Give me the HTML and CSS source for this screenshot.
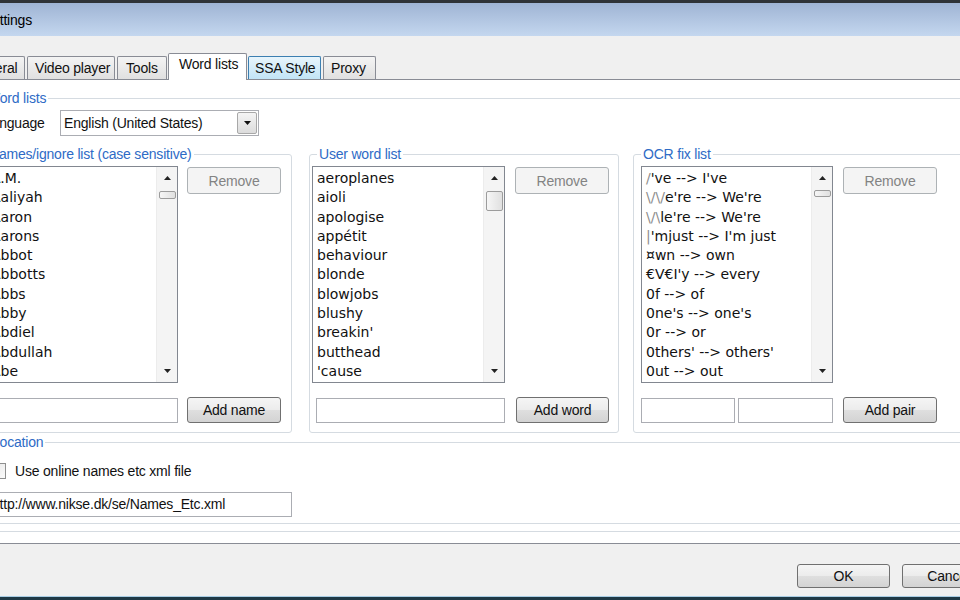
FILE: index.html
```html
<!DOCTYPE html>
<html lang="en">
<head>
  <meta charset="UTF-8" />
  <title>Settings</title>
  <meta name="viewport" content="width=device-width, initial-scale=1.0" />
  <link rel="stylesheet" href="styles.css">
</head>
<body>

  <div class="window">
    <div class="titlebar">Settings</div>

    <div class="client">
      <div class="tabs">
        <div class="tab tab-general">General</div>
        <div class="tab tab-video">Video player</div>
        <div class="tab tab-tools">Tools</div>
        <div class="tab tab-active">Word lists</div>
        <div class="tab tab-hover">SSA Style</div>
        <div class="tab tab-proxy">Proxy</div>
      </div>

      <div class="tab-page">
        <fieldset class="group group-words">
          <legend>Word lists</legend>

          <div class="lang-row">
            <span class="lang-label">Language</span>
            <div class="combo">
              <span>English (United States)</span>
              <span class="combo-btn">
                <svg width="7" height="4" viewBox="0 0 7 4"><polygon points="0,0 7,0 3.5,4" fill="#111" /></svg>
              </span>
            </div>
          </div>

          <div class="lists-row">
            <!-- names / ignore list -->
            <fieldset class="group box box-names">
              <legend>Names/ignore list (case sensitive)</legend>
              <div class="box-main">
                <div class="listbox">
                  <ul>
                    <li>A.M.</li>
                    <li>Aaliyah</li>
                    <li>Aaron</li>
                    <li>Aarons</li>
                    <li>Abbot</li>
                    <li>Abbotts</li>
                    <li>Abbs</li>
                    <li>Abby</li>
                    <li>Abdiel</li>
                    <li>Abdullah</li>
                    <li>Abe</li>
                  </ul>
                  <div class="scroll">
                    <span class="arrow"><svg width="7" height="4" viewBox="0 0 7 4"><polygon points="0,4 3.5,0 7,4" fill="#222" /></svg></span>
                    <span class="thumb thumb-small"></span>
                    <span class="scroll-space"></span>
                    <span class="arrow"><svg width="7" height="4" viewBox="0 0 7 4"><polygon points="0,0 7,0 3.5,4" fill="#222" /></svg></span>
                  </div>
                </div>
                <button class="btn btn-side btn-disabled">Remove</button>
              </div>
              <div class="box-add">
                <span class="textbox tb-names"></span>
                <button class="btn btn-add">Add name</button>
              </div>
            </fieldset>

            <!-- user word list -->
            <fieldset class="group box box-user">
              <legend>User word list</legend>
              <div class="box-main">
                <div class="listbox">
                  <ul>
                    <li>aeroplanes</li>
                    <li>aioli</li>
                    <li>apologise</li>
                    <li>appétit</li>
                    <li>behaviour</li>
                    <li>blonde</li>
                    <li>blowjobs</li>
                    <li>blushy</li>
                    <li>breakin'</li>
                    <li>butthead</li>
                    <li>'cause</li>
                  </ul>
                  <div class="scroll">
                    <span class="arrow"><svg width="7" height="4" viewBox="0 0 7 4"><polygon points="0,4 3.5,0 7,4" fill="#222" /></svg></span>
                    <span class="thumb thumb-tall"></span>
                    <span class="scroll-space"></span>
                    <span class="arrow"><svg width="7" height="4" viewBox="0 0 7 4"><polygon points="0,0 7,0 3.5,4" fill="#222" /></svg></span>
                  </div>
                </div>
                <button class="btn btn-side btn-disabled">Remove</button>
              </div>
              <div class="box-add">
                <span class="textbox tb-user"></span>
                <button class="btn btn-add">Add word</button>
              </div>
            </fieldset>

            <!-- OCR fix list -->
            <fieldset class="group box box-ocr">
              <legend>OCR fix list</legend>
              <div class="box-main">
                <div class="listbox">
                  <ul>
                    <li><span class="faint">/</span>'ve --&gt; I've</li>
                    <li><span class="faint">\/\/</span>e're --&gt; We're</li>
                    <li><span class="faint">\/\</span>le're --&gt; We're</li>
                    <li><span class="faint">|</span>'mjust --&gt; I'm just</li>
                    <li>¤wn --&gt; own</li>
                    <li>€V€I'y --&gt; every</li>
                    <li>0f --&gt; of</li>
                    <li>0ne's --&gt; one's</li>
                    <li>0r --&gt; or</li>
                    <li>0thers' --&gt; others'</li>
                    <li>0ut --&gt; out</li>
                  </ul>
                  <div class="scroll">
                    <span class="arrow"><svg width="7" height="4" viewBox="0 0 7 4"><polygon points="0,4 3.5,0 7,4" fill="#222" /></svg></span>
                    <span class="thumb thumb-small thumb-ocr"></span>
                    <span class="scroll-space"></span>
                    <span class="arrow"><svg width="7" height="4" viewBox="0 0 7 4"><polygon points="0,0 7,0 3.5,4" fill="#222" /></svg></span>
                  </div>
                </div>
                <button class="btn btn-side btn-disabled">Remove</button>
              </div>
              <div class="box-add">
                <span class="textbox tb-from"></span>
                <span class="textbox tb-to"></span>
                <button class="btn btn-add">Add pair</button>
              </div>
            </fieldset>
          </div>

          <fieldset class="group group-location">
            <legend>Location</legend>
            <div class="check-row">
              <span class="checkbox"></span>
              <span>Use online names etc xml file</span>
            </div>
            <div class="textbox tb-url">http://www.nikse.dk/se/Names_Etc.xml</div>
          </fieldset>
        </fieldset>
      </div>

      <div class="dialog-buttons">
        <button class="btn btn-dialog">OK</button>
        <button class="btn btn-dialog">Cancel</button>
      </div>
    </div>
  </div>

</body>
</html>
```

FILE: styles.css
```css
* {
  box-sizing: border-box;
}

html, body {
  margin: 0;
}

body {
  width: 960px;
  height: 600px;
  overflow: hidden;
  background: #f0f0f0;
  font-family: "Liberation Sans", Arial, sans-serif;
  font-size: 14px;
  letter-spacing: -0.2px;
  color: #111;
}

/* window frame, shifted left so the screenshot crop lines up */
.window {
  width: 1060px;
  height: 600px;
  margin-left: -40px;
  display: flex;
  flex-direction: column;
  border-bottom: 3px solid #1f3946;
}

.titlebar {
  height: 36px;
  border-top: 3px solid #2f3337;
  background: linear-gradient(#9fb4d4, #c4d7ef);
  padding-left: 23px;
  line-height: 34px;
  color: #000;
}

.client {
  flex: 1;
  background: #f0f0f0;
  padding-top: 17px;
  border-bottom: 1px solid #a9cde4;
}

/* tabs */
.tabs {
  display: flex;
  align-items: flex-start;
  height: 27px;
  padding-left: 1px;
}

.tab {
  height: 23px;
  margin-top: 3px;
  border: 1px solid #898c95;
  border-bottom: none;
  border-radius: 2px 2px 0 0;
  background: linear-gradient(#f4f4f4, #e0e0e0);
  padding-left: 7px;
  line-height: 22px;
  white-space: nowrap;
  color: #111;
}

.tab-general { width: 64px; margin-right: 2px; }
.tab-video { width: 88px; margin-right: 2px; }
.tab-tools { width: 50px; margin-right: 1px; padding-left: 8px; }
.tab-proxy { width: 53px; }

.tab-active {
  width: 79px;
  height: 27px;
  margin-top: 0;
  margin-right: 1px;
  padding-left: 10px;
  line-height: 21px;
  background: #fff;
  position: relative;
  z-index: 1;
}

.tab-hover {
  width: 73px;
  margin-right: 2px;
  padding-left: 6px;
  background: linear-gradient(#e8f5fc, #c2e4f6);
  border-color: #3c7fb1;
}

.tab-page {
  height: 465px;
  margin-top: -1px;
  background: #fff;
  border: 1px solid #898c95;
}

/* group boxes */
.group {
  margin: 0;
  padding: 0;
  min-width: 0;
  border: 1px solid #d5dbe1;
  border-radius: 3px;
}

.group > legend {
  margin-left: 7px;
  padding: 0 2px;
  line-height: 16px;
  color: #2e6bc6;
}

.group-words {
  margin: 10px 0 0 16px;
  padding: 4px 0 7px 0;
}

.lang-row {
  display: flex;
  align-items: center;
  gap: 6px;
  padding-left: 6px;
  height: 26px;
}

.lang-label {
  width: 70px;
}

.combo {
  width: 199px;
  height: 26px;
  border: 1px solid #abadb3;
  background: #fff;
  display: flex;
  align-items: center;
  padding-left: 3px;
}

.combo-btn {
  margin-left: auto;
  margin-right: 1px;
  width: 20px;
  height: 22px;
  border: 1px solid #a8a8a8;
  border-radius: 2px;
  background: linear-gradient(#f4f4f4, #dcdcdc);
  display: flex;
  align-items: center;
  justify-content: center;
}

.lists-row {
  display: flex;
  margin: 10px 0 0 5px;
}

.box {
  padding: 4px 0 9px 2px;
}

.box > legend {
  margin-left: 5px;
}

.box-names { width: 309px; margin-right: 17px; }
.box-user { width: 310px; margin-right: 14px; }
.box-ocr { width: 360px; padding-left: 7px; }

.box-names > legend { margin-left: 1px; }
.box-ocr > legend { margin-left: 0; }

.box-main {
  display: flex;
  align-items: flex-start;
}

.listbox {
  height: 217px;
  border: 1px solid #828790;
  background: #fff;
  display: flex;
}

.box-names .listbox { width: 192px; }
.box-user .listbox { width: 193px; }
.box-ocr .listbox { width: 192px; }

.listbox ul {
  flex: 1;
  margin: 0;
  padding: 2px 0 0 4px;
  list-style: none;
  overflow: hidden;
  font-family: "DejaVu Sans", Verdana, sans-serif;
  font-size: 14px;
  letter-spacing: 0;
  line-height: 19.3px;
  color: #111;
  white-space: nowrap;
}

.faint {
  color: #8c8c8c;
}

.scroll {
  width: 21px;
  background: #f4f4f4;
  border-left: 1px solid #ececec;
  display: flex;
  flex-direction: column;
  align-items: center;
}

.arrow {
  width: 100%;
  height: 22px;
  display: flex;
  align-items: center;
  justify-content: center;
}

.thumb {
  width: 17px;
  margin-top: 2px;
  border: 1px solid #9c9c9c;
  border-radius: 2px;
  background: linear-gradient(90deg, #f6f6f6, #e0e0e0);
}

.thumb-small { height: 8px; }
.thumb-tall { height: 20px; }
.thumb-ocr { margin-top: 1px; height: 7px; }

.scroll-space {
  flex: 1;
}

/* buttons */
.btn {
  font: inherit;
  letter-spacing: -0.2px;
  padding: 0;
  color: #111;
  border: 1px solid #707070;
  border-radius: 3px;
  background: linear-gradient(#f5f5f5 0%, #ececec 49%, #dfdfdf 50%, #d3d3d3 100%);
}

.btn-disabled {
  border-color: #adb2b5;
  background: #f4f4f4;
  color: #838383;
}

.btn-side {
  width: 94px;
  height: 27px;
  margin-top: 1px;
  margin-left: 9px;
}

.box-user .btn-side,
.box-ocr .btn-side {
  margin-left: 10px;
}

.box-add {
  display: flex;
  align-items: flex-start;
  margin-top: 14px;
}

.btn-add {
  width: 94px;
  height: 26px;
  margin-left: 9px;
}

.box-user .btn-add { width: 93px; margin-left: 11px; }
.box-ocr .btn-add { margin-left: 10px; }

.textbox {
  display: block;
  height: 25px;
  margin-top: 1px;
  border: 1px solid #abadb3;
  background: #fff;
}

.tb-names { width: 192px; }
.tb-user { width: 189px; margin-left: 4px; }
.tb-from { width: 94px; }
.tb-to { width: 95px; margin-left: 3px; }

/* location */
.group-location {
  margin: 1px 0 0 4px;
  padding: 12px 0 6px 0;
}

.check-row {
  display: flex;
  align-items: center;
  gap: 9px;
  height: 18px;
  padding-left: 7px;
}

.checkbox {
  width: 16px;
  height: 16px;
  border: 1px solid #8e8f8f;
  background: linear-gradient(135deg, #e6e6e6, #fbfbfb);
}

.tb-url {
  width: 303px;
  margin: 12px 0 0 6px;
  padding-left: 2px;
  line-height: 23px;
  color: #111;
}

/* OK / Cancel */
.dialog-buttons {
  display: flex;
  justify-content: flex-end;
  gap: 12px;
  padding: 20px 25px 0 0;
}

.btn-dialog {
  width: 93px;
  height: 24px;
}
```
